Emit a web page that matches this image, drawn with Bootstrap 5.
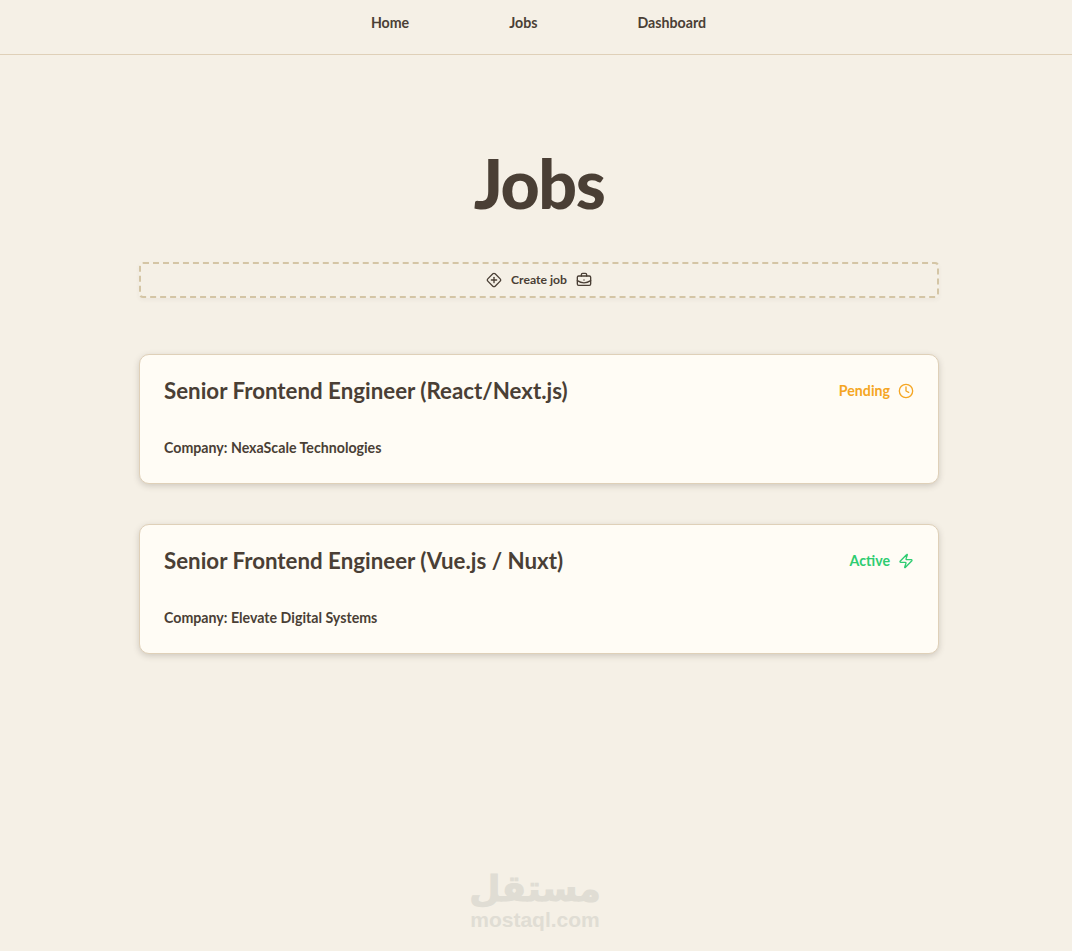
<!DOCTYPE html>
<html lang="en">
<head>
  <meta charset="UTF-8">
  <meta name="viewport" content="width=device-width, initial-scale=1">
  <title>Jobs</title>
  <link href="https://cdn.jsdelivr.net/npm/bootstrap@5.3.2/dist/css/bootstrap.min.css" rel="stylesheet">
  <style>
    body {
      background-color: #f5f0e6;
      color: #4a3f35;
      font-family: Lato, "Liberation Sans", sans-serif;
      font-weight: 700;
      min-height: 951px;
    }
    .top-bar {
      height: 55px;
      border-bottom: 1px solid #dfd0b8;
      padding-left: 5px;
      padding-bottom: 9px;
      gap: 100px;
    }
    .top-bar a {
      color: #4a3f35;
      text-decoration: none;
      font-size: 14.2px;
    }
    .page-wrap {
      width: 800px;
      margin-left: 139px;
    }
    .page-title {
      font-size: 68px;
      font-weight: 900;
      line-height: 86px;
      margin: 85px 0 36px;
      letter-spacing: -1.5px;
    }
    .create-box {
      height: 36px;
      border: 2px dashed #d4c5a5;
      border-radius: 4px;
      box-shadow: 0 2px 4px rgba(74, 63, 53, .05);
      font-size: 12.2px;
      line-height: 18px;
      gap: 9px;
      margin-bottom: 56px;
    }
    .job-box {
      height: 130px;
      background: #fffcf5;
      border: 1px solid #dfd0b8;
      border-radius: 10px;
      box-shadow: 0 2px 6px rgba(74, 63, 53, .22);
      padding: 21px 24px 20px;
      margin-bottom: 40px;
    }
    .job-title {
      font-size: 22.3px;
      font-weight: 700;
      line-height: 30px;
      margin: 0;
    }
    .job-state {
      font-size: 14.2px;
      line-height: 30px;
    }
    .job-company {
      font-size: 14.2px;
      line-height: 20px;
      margin: 32px 0 0;
    }
    .state-pending { color: #f5a623; }
    .state-active { color: #2ecc71; }
    .line-icon {
      fill: none;
      stroke: currentColor;
      stroke-width: 2;
      stroke-linecap: round;
      stroke-linejoin: round;
      flex-shrink: 0;
    }
    .site-mark {
      position: absolute;
      left: 469px;
      top: 868px;
      width: 132px;
      color: #e0ddd4;
      text-align: center;
    }
    .mark-ar {
      font-family: "DejaVu Sans", sans-serif;
      font-size: 36px;
      font-weight: 700;
      line-height: 42px;
      -webkit-text-stroke: 1px #e0ddd4;
    }
    .mark-en {
      font-family: "Liberation Sans", sans-serif;
      font-size: 21px;
      font-weight: 700;
      line-height: 20px;
    }
  </style>
</head>
<body class="position-relative">

  <nav class="top-bar d-flex justify-content-center align-items-center">
    <a href="#">Home</a>
    <a href="#">Jobs</a>
    <a href="#">Dashboard</a>
  </nav>

  <main class="page-wrap">
    <h1 class="page-title text-center">Jobs</h1>

    <div class="create-box d-flex justify-content-center align-items-center">
      <svg class="line-icon" width="16" height="16" viewBox="0 0 24 24"><path d="M12 8v8"/><path d="M2.7 10.3a2.41 2.41 0 0 0 0 3.41l7.59 7.59a2.41 2.41 0 0 0 3.41 0l7.59-7.59a2.41 2.41 0 0 0 0-3.41L13.7 2.71a2.41 2.41 0 0 0-3.41 0z"/><path d="M8 12h8"/></svg>
      <span>Create job</span>
      <svg class="line-icon" width="16" height="16" viewBox="0 0 24 24"><path d="M12 12h.01"/><path d="M16 6V4a2 2 0 0 0-2-2h-4a2 2 0 0 0-2 2v2"/><path d="M22 13a18.15 18.15 0 0 1-20 0"/><rect width="20" height="14" x="2" y="6" rx="2"/></svg>
    </div>

    <div class="job-box">
      <div class="d-flex justify-content-between align-items-center">
        <h2 class="job-title">Senior Frontend Engineer (React/Next.js)</h2>
        <span class="job-state state-pending d-flex align-items-center gap-2">Pending
          <svg class="line-icon" width="16" height="16" viewBox="0 0 24 24"><circle cx="12" cy="12" r="10"/><path d="M12 6v6l4 2"/></svg>
        </span>
      </div>
      <p class="job-company">Company: NexaScale Technologies</p>
    </div>

    <div class="job-box">
      <div class="d-flex justify-content-between align-items-center">
        <h2 class="job-title">Senior Frontend Engineer (Vue.js / Nuxt)</h2>
        <span class="job-state state-active d-flex align-items-center gap-2">Active
          <svg class="line-icon" width="16" height="16" viewBox="0 0 24 24"><path d="M4 14a1 1 0 0 1-.78-1.63l9.9-10.2a.5.5 0 0 1 .86.46l-1.92 6.02A1 1 0 0 0 13 10h7a1 1 0 0 1 .78 1.63l-9.9 10.2a.5.5 0 0 1-.86-.46l1.92-6.02A1 1 0 0 0 11 14z"/></svg>
        </span>
      </div>
      <p class="job-company">Company: Elevate Digital Systems</p>
    </div>
  </main>

  <div class="site-mark">
    <div class="mark-ar" lang="ar" dir="rtl">مستقل</div>
    <div class="mark-en">mostaql.com</div>
  </div>

  <script src="https://cdn.jsdelivr.net/npm/bootstrap@5.3.2/dist/js/bootstrap.bundle.min.js"></script>
</body>
</html>
